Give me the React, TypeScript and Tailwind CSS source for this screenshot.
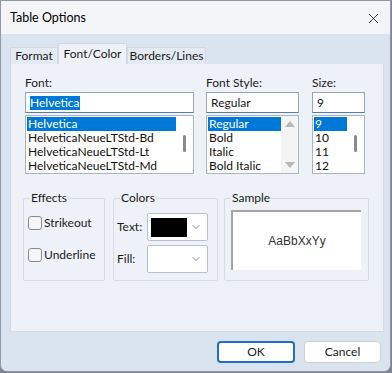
import React from 'react';
import { X, ChevronDown } from 'lucide-react';

const font = { fontFamily: 'Lato, "Noto Sans", sans-serif' };

const fonts = ['Helvetica', 'HelveticaNeueLTStd-Bd', 'HelveticaNeueLTStd-Lt', 'HelveticaNeueLTStd-Md'];
const styles = ['Regular', 'Bold', 'Italic', 'Bold Italic'];
const sizes = ['9', '10', '11', '12'];

function ListBox({ items, width, scroll }: { items: string[]; width: string; scroll: 'thumb' | 'arrows' }) {
  return (
    <div className={`${width} h-[59px] bg-white border border-[#aab6c4] flex`}>
      <div className="flex-1 pt-[1px] pl-[1px] overflow-hidden">
        {items.map((it, i) => (
          <div
            key={it}
            className={`h-[14px] leading-[14px] pl-[1px] whitespace-nowrap ${i === 0 ? 'bg-[#0078d7] text-white' : 'text-[#111]'}`}
          >
            {it}
          </div>
        ))}
      </div>
      {scroll === 'thumb' ? (
        <div className="w-[17px] flex justify-center pt-[19px]">
          <div className="w-[3px] h-[17px] rounded-full bg-[#8a8a8a]" />
        </div>
      ) : (
        <div className="w-[17px] flex flex-col items-center justify-between py-[5px] bg-[#f4f4f4]">
          <div className="w-0 h-0 border-l-[5px] border-r-[5px] border-b-[6px] border-l-transparent border-r-transparent border-b-[#b8b8b8]" />
          <div className="w-0 h-0 border-l-[5px] border-r-[5px] border-t-[6px] border-l-transparent border-r-transparent border-t-[#b8b8b8]" />
        </div>
      )}
    </div>
  );
}

function Group({ label, className, children }: { label: string; className: string; children: React.ReactNode }) {
  return (
    <div className={`relative border border-[#d5dce5] rounded-[2px] ${className}`}>
      <span className="absolute -top-[8px] left-[6px] px-[1px] bg-[#eef2f8] leading-[14px]">{label}</span>
      {children}
    </div>
  );
}

function ColorCombo({ swatch }: { swatch?: boolean }) {
  return (
    <div className="w-[61px] h-[28px] bg-white border border-[#b8c2ce] rounded-[2px] flex items-center pl-[3px] pr-[5px]">
      <div className={`w-[36px] h-[19px] ${swatch ? 'bg-black' : ''}`} />
      <div className="flex-1 flex justify-end">
        <ChevronDown size={12} strokeWidth={1.5} className="text-[#666]" />
      </div>
    </div>
  );
}

export default function App() {
  return (
    <div className="w-[392px] h-[373px] bg-[#7d8590] text-[12px] text-[#1a1a1a]" style={font}>
      <div className="w-[391px] h-[372px] bg-[#dae4f0] border border-[#8f98a4] rounded-b-[7px] flex flex-col overflow-hidden">
        {/* title bar */}
        <div className="h-[33px] bg-[#f4f5f7] flex items-center justify-between pl-[9px] pr-[8px] pt-[1px]">
          <span className="text-[12.5px] text-black">Table Options</span>
          <X size={17} strokeWidth={1.2} className="text-[#222]" />
        </div>

        <div className="flex flex-col px-[9px] pt-[9px]">
          {/* tabs */}
          <div className="flex items-end h-[21px]">
            <div className="h-[17px] w-[48px] bg-[#e4eaf2] border border-b-0 border-[#d2d9e2] flex items-center justify-center">Format</div>
            <div className="h-[21px] w-[69px] bg-[#eef2f8] border border-b-0 border-[#d2d9e2] flex items-center justify-center">Font/Color</div>
            <div className="h-[17px] w-[79px] bg-[#e4eaf2] border border-b-0 border-[#d2d9e2] flex items-center justify-center">Borders/Lines</div>
          </div>

          {/* panel */}
          <div className="h-[268px] w-[374px] bg-[#eef2f8] border border-t-0 border-[#d2d9e2] pl-[14px] pt-[12px]">
            <div className="flex gap-[12px]">
              <div className="flex flex-col w-[169px]">
                <span className="leading-[14px] mb-[2px]">Font:</span>
                <div className="h-[21px] bg-white border border-[#93a7c0] border-b-[#5d7ca3] flex items-center pl-[4px] mb-[2px]">
                  <span className="bg-[#0078d7] text-white leading-[14px]">Helvetica</span>
                </div>
                <ListBox items={fonts} width="w-[169px]" scroll="thumb" />
              </div>
              <div className="flex flex-col w-[93px]">
                <span className="leading-[14px] mb-[2px]">Font Style:</span>
                <div className="h-[21px] bg-white border border-[#93a7c0] border-b-[#5d7ca3] flex items-center pl-[4px] mb-[2px]">Regular</div>
                <ListBox items={styles} width="w-[93px]" scroll="arrows" />
              </div>
              <div className="flex flex-col w-[53px] ml-[1px]">
                <span className="leading-[14px] mb-[2px]">Size:</span>
                <div className="h-[21px] bg-white border border-[#93a7c0] border-b-[#5d7ca3] flex items-center pl-[4px] mb-[2px]">9</div>
                <ListBox items={sizes} width="w-[53px]" scroll="thumb" />
              </div>
            </div>

            {/* lower groups */}
            <div className="flex mt-[24px] -ml-[2px]">
              <Group label="Effects" className="w-[82px] h-[83px] pl-[4px] pt-[17px]">
                <label className="flex items-center gap-[2px] h-[14px]">
                  <span className="w-[14px] h-[14px] rounded-[3px] border border-[#8a8a8a] bg-[#f6f6f6]" />
                  Strikeout
                </label>
                <label className="flex items-center gap-[2px] h-[14px] mt-[18px]">
                  <span className="w-[14px] h-[14px] rounded-[3px] border border-[#8a8a8a] bg-[#f6f6f6]" />
                  Underline
                </label>
              </Group>
              <Group label="Colors" className="w-[105px] h-[83px] ml-[8px] pl-[3px] pt-[14px]">
                <div className="flex items-center">
                  <span className="w-[30px]">Text:</span>
                  <ColorCombo swatch />
                </div>
                <div className="flex items-center mt-[4px]">
                  <span className="w-[30px]">Fill:</span>
                  <ColorCombo />
                </div>
              </Group>
              <Group label="Sample" className="w-[145px] h-[83px] ml-[6px] pl-[6px] pt-[11px]">
                <div className="w-[130px] h-[60px] bg-white border-t-2 border-l-2 border-[#a5a5a5] flex items-center justify-center">
                  <span className="text-[12px] text-[#333]" style={{ fontFamily: '"Liberation Sans", Arial, sans-serif' }}>AaBbXxYy</span>
                </div>
              </Group>
            </div>
          </div>

          {/* buttons */}
          <div className="flex justify-end gap-[9px] pt-[9px]">
            <button className="w-[78px] h-[22px] bg-white border-2 border-[#1f6fc6] rounded-[4px] text-[12px]">OK</button>
            <button className="w-[77px] h-[22px] bg-white border border-[#d0d0d0] rounded-[4px] text-[12px]">Cancel</button>
          </div>
        </div>
      </div>
    </div>
  );
}
